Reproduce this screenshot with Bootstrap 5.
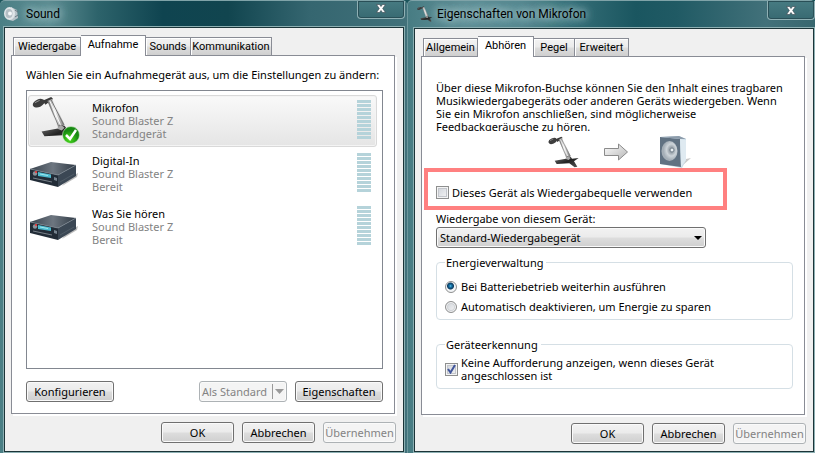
<!DOCTYPE html>
<html lang="de">
<head>
<meta charset="utf-8">
<meta name="viewport" content="width=device-width, initial-scale=1">
<title>Sound</title>
<link href="https://cdn.jsdelivr.net/npm/bootstrap@5.3.0/dist/css/bootstrap.min.css" rel="stylesheet">
<style>
  body { font: 11px/13px "Noto Sans", "Open Sans", sans-serif; color: #000; background: #1b545b; }
  .desktop { display: grid; grid-template-columns: 407fr 408fr; min-height: 100vh; }
  .win { border-radius: 5px 5px 0 0; border-top: 1px solid #7fa3a8; }
  .win-left { padding: 0 2px 0 3px; background: linear-gradient(90deg, #4a7f85 0, #5d8d92 12%, #2d636b 24%, #0f4450 40%, #11454f 56%, #356670 76%, #41717a 100%); }
  .win-right { padding-left: 5px; border-left: 1px solid #6d979d;
    background: linear-gradient(90deg, #477c83 0, #5f8f96 14%, #558890 28%, #326b74 42%, #1a5660 56%, #205a64 66%, #42717a 88%, #38676f 100%); }
  .title-row { height: 25px; }
  .win-right .title-row { height: 26px; }
  .title-text { margin-left: 7px; font: 12px/16px Roboto, "Noto Sans", sans-serif; text-shadow: 0 0 8px #b9d5d8, 0 0 8px #9dc0c4, 0 0 12px #8fb5ba; }
  .win-right .title-text { margin-left: 4px; }
  .btn-x { width: 48px; height: 18px; margin-left: auto; padding: 0 0 2px; border: 1px solid #8fb0b4; border-top: 0;
    border-radius: 0 0 4px 4px; background: linear-gradient(#477b82, #386a72); box-shadow: inset 0 0 0 1px #294f57; line-height: 0; }
  .win-right .btn-x { height: 19px; padding: 0; }
  .client { border: 1px solid #8db0b3; box-shadow: inset 0 0 0 1px #1b3438; background: #f0f0f0; padding: 8px 8px 8px 7px; }
  .win-left .client { padding-bottom: 9px; }
  .tabs { padding-left: 2px; }
  .tab { height: 18px; padding: 0; border: 1px solid #898c95; border-bottom: 0; border-left-width: 0; color: #000; font-family: Roboto, "Noto Sans", sans-serif;
    background: linear-gradient(#f3f3f3 0, #ebebeb 48%, #dddddd 52%, #cfcfcf 100%); white-space: nowrap; text-align: center; box-shadow: inset 1px 1px 0 #fff; }
  .tab:first-child { border-left-width: 1px; }
  .tab.active { height: 21px; margin-bottom: -1px; padding-bottom: 3px; background: #fff; z-index: 1; position: relative; }
  .w-68 { width: 68px; } .w-65 { width: 65px; } .w-45 { width: 45px; } .w-81 { width: 81px; }
  .w-55 { width: 55px; } .w-56 { width: 56px; } .w-41 { width: 41px; } .w-54 { width: 54px; }
  .sheet { border: 1px solid #898c95; background: #fff; box-shadow: 2px 2px 0 #fff; padding: 12px 11px 11px 14px; margin: 0 1px 8px 0; }
  .devices { border: 1px solid #828790; padding: 4px 5px 3px 1px; margin-top: 9px; margin-bottom: 12px; }
  .device { height: 53px; padding: 0 5px 0 0; border: 1px solid transparent; border-radius: 3px; }
  .device.chosen { border-color: #d9d9d9; box-shadow: inset 0 0 0 1px #f4f4f4; background: linear-gradient(#f9f9f9, #e5e5e5); height: 52px; margin-bottom: 1px; }
  .device-icon { width: 63px; flex: none; line-height: 0; }
  .device-text { padding-top: 5px; }
  .muted { color: #838383; }
  .meter { width: 14px; height: 39px; background: repeating-linear-gradient(#b5d3da 0 3px, transparent 3px 4px); margin: 4px 0 0 auto; }
  .wbtn { height: 21px; padding: 0; border: 1px solid #707070; border-radius: 3px; color: #000; white-space: nowrap;
    background: linear-gradient(#f2f2f2 0, #ebebeb 48%, #dddddd 52%, #cfcfcf 100%); box-shadow: inset 0 0 0 1px #fafafa; }
  .wbtn:disabled { border-color: #adb2b5; background: #f4f4f4; color: #838383; }
  .w-88 { width: 88px; } .w-73 { width: 73px; }
  .split-mark { border-left: 1px solid #999; height: 15px; padding-left: 2px; margin-left: 5px; line-height: 0; }
  .intro { height: 50px; overflow: hidden; margin-top: 12px; }
  .flowrow { height: 32px; margin: 5px 0 0 112px; }
  .marked { border: 4px solid #ff8080; width: 303px; height: 42px; margin: 0 0 2px -12px; padding: 7px 8px 0; }
  .check, .radio { appearance: none; flex: none; width: 13px; height: 13px; margin: 0; border: 1px solid #8e8f8f;
    background: linear-gradient(135deg, #cdd1d8, #f6f6f6); }
  .check { box-shadow: inset 0 0 0 1px #f4f4f4, inset 0 0 0 2px #c3c6cc; }
  .check-text { margin-left: 3px; }
  .radio { width: 12px; height: 12px; border-radius: 50%; box-shadow: inset 0 0 0 1px #f4f4f4, inset 0 0 0 2px #cfd2d6; }
  .radio:checked { background: radial-gradient(circle at 45% 40%, #6fd0f5 0, #1c7fb4 1px, #0b3a5f 3px, #f2f4f6 4px); box-shadow: none; }
  .tick { left: 2px; top: 1px; pointer-events: none; }
  .combo-wrap { width: 270px; margin-top: 2px; }
  .combo-wrap::after { content: ""; position: absolute; right: 4px; top: 9px; border: 4px solid transparent; border-top-color: #000; border-bottom: 0; pointer-events: none; }
  .combo { appearance: none; width: 100%; padding: 0 3px; text-align: left; line-height: 19px; }
  .group { border: 1px solid #d5dfe5; border-radius: 4px; padding: 0 8px 0; margin: 8px 0 0; min-width: 0; }
  .group legend { float: none; width: auto; font-size: 11px; line-height: 13px; padding: 0 3px 0 1px; margin: 0; }
  .group-a { height: 64px; }
  .group-b { height: 51px; margin-top: 18px; }
  .choices { display: grid; gap: 7px; padding-top: 11px; }
  .choice-b { margin-top: 5px; }
</style>
<script src="https://cdn.jsdelivr.net/npm/bootstrap@5.3.0/dist/js/bootstrap.bundle.min.js"></script>
</head>
<body>
<svg width="0" height="0" class="position-absolute" aria-hidden="true">
  <defs>
    <linearGradient id="gStem" x1="0" x2="1"><stop offset="0" stop-color="#777"/><stop offset=".45" stop-color="#f2f2f2"/><stop offset="1" stop-color="#777"/></linearGradient>
    <linearGradient id="gBase" x1="0" y1="0" x2="1" y2="1"><stop offset="0" stop-color="#777"/><stop offset=".5" stop-color="#222"/><stop offset="1" stop-color="#555"/></linearGradient>
    <linearGradient id="gTop" x1="0" x2="1"><stop offset="0" stop-color="#39434e"/><stop offset=".5" stop-color="#6d7680"/><stop offset="1" stop-color="#303a45"/></linearGradient>
    <linearGradient id="gArrow" x1="0" x2="1" y1="0" y2="1"><stop offset="0" stop-color="#fff"/><stop offset="1" stop-color="#b5b5b5"/></linearGradient>
    <radialGradient id="gGreen" cx=".4" cy=".75"><stop offset="0" stop-color="#4ce11c"/><stop offset="1" stop-color="#178a12"/></radialGradient>
    <radialGradient id="gCone" cx=".62" cy=".45"><stop offset="0" stop-color="#fff"/><stop offset=".2" stop-color="#8d979f"/><stop offset=".6" stop-color="#cdd4d9"/><stop offset="1" stop-color="#a5afb7"/></radialGradient>
    <symbol id="mic" viewBox="0 0 48 48">
      <path d="M11 5 L20 1 L22 3 L14 9Z" fill="#3a3a3a"/>
      <path d="M16 5 L21 3 L34 30 L27 33Z" fill="url(#gStem)"/>
      <path d="M17 6 L28 32 M20 4 L33 30" stroke="#777" stroke-width="1" fill="none"/>
      <path d="M18.500 5 L30.500 32" stroke="#fff" stroke-width="1"/>
      <ellipse cx="7" cy="7.500" rx="6.500" ry="4" transform="rotate(-24 7 7.500)" fill="#3d3d3d"/>
      <path d="M3 7 L8 4.500" stroke="#999" stroke-width="1"/>
      <path d="M10 37 L27 34 L29 30 L34 31 L36 34 L46 33 L39 38 L44 46 L40 47 L32 41 L13 42Z" fill="url(#gBase)"/>
      <path d="M26 34 L30 30 L34 33 L31 36Z" fill="#aaa"/>
    </symbol>
    <symbol id="box" viewBox="0 0 50 28">
      <path d="M40 17 L49 12 L48 16 L33 25Z" fill="#bbb"/>
      <path d="M1 8 L22 1 L47 4 L29 14Z" fill="url(#gTop)"/>
      <path d="M1 8 L29 14 L29 26 L1 19Z" fill="#222c37"/>
      <path d="M29 14 L47 4 L47 15 L29 26Z" fill="#3b4754"/>
      <path d="M1 8 L29 14 L47 4" fill="none" stroke="#7c8791" stroke-width=".7"/>
      <path d="M9 11 L22 13.500 L22 17 L9 15Z" fill="#4dbbcf"/><path d="M11 13 L19 14.500" stroke="#b5f2f5" stroke-width=".8"/>
      <circle cx="6" cy="12.500" r="2.200" fill="#8b929a"/><circle cx="7" cy="11" r="1" fill="#f33"/>
      <path d="M4 17 L23 21" stroke="#8f979e" stroke-width=".8"/><path d="M25 16 L28 17 V20 L25 19Z" fill="#76838f"/>
      <path d="M31 21 L45 13" stroke="#4f5b66"/>
    </symbol>
  </defs>
</svg>

<main class="desktop">
  <section class="win win-left d-flex flex-column" aria-label="Sound">
    <header class="title-row d-flex align-items-center">
      <svg width="16" height="16" viewBox="0 0 16 16" aria-hidden="true"><path d="M8 1 L14 4 L15 12 L10 15 L6 14Z" fill="#b7c2c8"/><ellipse cx="6.500" cy="7.500" rx="5.500" ry="6.500" fill="#dfe5e8"/><ellipse cx="6" cy="7.500" rx="3.500" ry="4.500" fill="#b3bec4"/><circle cx="7" cy="7.500" r="2" fill="#f5f8f9"/><path d="M12 4 L15 6 M12 11 L15 9" stroke="#64777f"/></svg>
      <span class="title-text">Sound</span>
      <button class="btn-x align-self-start" aria-label="Schließen"><svg width="10" height="9" viewBox="0 0 10 9"><path d="M.5 .5 H3.500 L5 2.500 L6.500 .5 H9.500 L6.700 4.500 L9.500 8.500 H6.500 L5 6.500 L3.500 8.500 H.5 L3.300 4.500Z" fill="#fff" stroke="#3f4f57" stroke-width=".7"/></svg></button>
    </header>
    <div class="client d-flex flex-column flex-grow-1">
      <div class="tabs d-flex align-items-end" role="tablist">
        <button class="tab w-68" role="tab">Wiedergabe</button>
        <button class="tab active w-65" role="tab" aria-selected="true">Aufnahme</button>
        <button class="tab w-45" role="tab">Sounds</button>
        <button class="tab w-81" role="tab">Kommunikation</button>
      </div>
      <div class="sheet d-flex flex-column flex-grow-1" role="tabpanel">
        <div class="text-nowrap">Wählen Sie ein Aufnahmegerät aus, um die Einstellungen zu ändern:</div>
        <div class="devices flex-grow-1">
          <div class="device chosen d-flex">
            <div class="device-icon"><svg width="53" height="50" viewBox="0 0 53 50" aria-hidden="true"><use href="#mic" x="3" y="0" width="46" height="46"/><circle cx="42" cy="39" r="8.500" fill="url(#gGreen)" stroke="#d7efd0" stroke-width=".6"/><path d="M37 39 L41 43 L47 34" fill="none" stroke="#fff" stroke-width="2.500"/></svg></div>
            <div class="device-text"><div>Mikrofon</div><div class="muted">Sound Blaster Z</div><div class="muted">Standardgerät</div></div>
            <div class="meter"></div>
          </div>
          <div class="device d-flex">
            <div class="device-icon pt-2"><svg width="50" height="28" class="mt-1" aria-hidden="true"><use href="#box"/></svg></div>
            <div class="device-text"><div>Digital-In</div><div class="muted">Sound Blaster Z</div><div class="muted">Bereit</div></div>
            <div class="meter"></div>
          </div>
          <div class="device d-flex">
            <div class="device-icon pt-2"><svg width="50" height="28" class="mt-1" aria-hidden="true"><use href="#box"/></svg></div>
            <div class="device-text"><div>Was Sie hören</div><div class="muted">Sound Blaster Z</div><div class="muted">Bereit</div></div>
            <div class="meter"></div>
          </div>
        </div>
        <div class="d-flex gap-2">
          <button class="wbtn w-88 me-auto">Konfigurieren</button>
          <button class="wbtn w-88 d-flex align-items-center justify-content-center" disabled>Als Standard<span class="split-mark d-flex align-items-center"><svg width="9" height="5"><path d="M0 0 H9 L4.500 5Z" fill="#999"/></svg></span></button>
          <button class="wbtn w-88">Eigenschaften</button>
        </div>
      </div>
      <div class="d-flex gap-2 justify-content-end"><button class="wbtn w-73">OK</button><button class="wbtn w-73">Abbrechen</button><button class="wbtn w-73" disabled>Übernehmen</button></div>
    </div>
  </section>

  <section class="win win-right d-flex flex-column" aria-label="Eigenschaften von Mikrofon">
    <header class="title-row d-flex align-items-center">
      <svg width="16" height="16" class="ms-1" aria-hidden="true"><use href="#mic"/></svg>
      <span class="title-text">Eigenschaften von Mikrofon</span>
      <button class="btn-x align-self-start" aria-label="Schließen"><svg width="10" height="9" viewBox="0 0 10 9"><path d="M.5 .5 H3.500 L5 2.500 L6.500 .5 H9.500 L6.700 4.500 L9.500 8.500 H6.500 L5 6.500 L3.500 8.500 H.5 L3.300 4.500Z" fill="#fff" stroke="#3f4f57" stroke-width=".7"/></svg></button>
    </header>
    <div class="client d-flex flex-column flex-grow-1">
      <div class="tabs d-flex align-items-end" role="tablist">
        <button class="tab w-55" role="tab">Allgemein</button>
        <button class="tab active w-56" role="tab" aria-selected="true">Abhören</button>
        <button class="tab w-41" role="tab">Pegel</button>
        <button class="tab w-54" role="tab">Erweitert</button>
      </div>
      <div class="sheet d-flex flex-column flex-grow-1" role="tabpanel">
        <div class="intro text-nowrap">Über diese Mikrofon-Buchse können Sie den Inhalt eines tragbaren<br>Musikwiedergabegeräts oder anderen Geräts wiedergeben. Wenn<br>Sie ein Mikrofon anschließen, sind möglicherweise<br>Feedbackgeräusche zu hören.</div>
        <div class="flowrow d-flex align-items-center gap-4">
          <svg width="32" height="32" aria-hidden="true"><use href="#mic"/></svg>
          <svg width="24" height="18" viewBox="0 0 24 18" aria-hidden="true"><path d="M.5 5.500 H14.500 V1 L23.500 9 L14.500 17 V12.500 H.5Z" fill="url(#gArrow)" stroke="#8b8b8b"/></svg>
          <svg width="32" height="32" viewBox="0 0 32 32" class="ms-2" aria-hidden="true"><path d="M23 29 L31 22 L26 23Z" fill="#c9c9c9"/><path d="M0 1 L19 0 L26 3 V24 L22 32 L0 28Z" fill="#c9dbe6"/><path d="M0 1 L20 3 L21 31 L0 28Z" fill="#617282"/><path d="M20 3 L26 4 V24 L21 31Z" fill="#dfeaf1"/><path d="M0 1 L19 0 L26 3 L20 3Z" fill="#8d9cab"/><ellipse cx="9.500" cy="15" rx="8" ry="10" fill="url(#gCone)"/><circle cx="12" cy="14" r="2" fill="#e9eef1" stroke="#75828d"/></svg>
        </div>
        <div class="marked d-flex align-items-center">
          <input class="check" type="checkbox" id="listen"><label for="listen" class="check-text text-nowrap">Dieses Gerät als Wiedergabequelle verwenden</label>
        </div>
        <label for="target">Wiedergabe von diesem Gerät:</label>
        <div class="combo-wrap position-relative"><select id="target" class="wbtn combo"><option>Standard-Wiedergabegerät</option></select></div>
        <fieldset class="group group-a"><legend>Energieverwaltung</legend>
          <div class="choices">
            <div class="d-flex align-items-center"><input class="radio" type="radio" name="power" id="p1" checked><label for="p1" class="ms-1">Bei Batteriebetrieb weiterhin ausführen</label></div>
            <div class="d-flex align-items-center"><input class="radio" type="radio" name="power" id="p2"><label for="p2" class="ms-1">Automatisch deaktivieren, um Energie zu sparen</label></div>
          </div>
        </fieldset>
        <fieldset class="group group-b"><legend>Geräteerkennung</legend>
          <div class="choice-b d-flex align-items-center"><span class="position-relative d-flex"><input class="check" type="checkbox" id="quiet" checked><svg class="tick position-absolute" width="9" height="10" viewBox="0 0 9 10"><path d="M1 5 L3.500 8.500 L8 1" fill="none" stroke="#40559b" stroke-width="2"/></svg></span><label for="quiet" class="check-text">Keine Aufforderung anzeigen, wenn dieses Gerät<br>angeschlossen ist</label></div>
        </fieldset>
      </div>
      <div class="d-flex gap-2 justify-content-end"><button class="wbtn w-73">OK</button><button class="wbtn w-73">Abbrechen</button><button class="wbtn w-73" disabled>Übernehmen</button></div>
    </div>
  </section>
</main>
</body>
</html>
